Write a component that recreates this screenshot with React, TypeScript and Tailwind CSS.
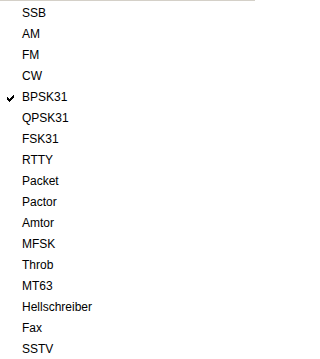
import React from "react";

const items = [
  "SSB",
  "AM",
  "FM",
  "CW",
  "BPSK31",
  "QPSK31",
  "FSK31",
  "RTTY",
  "Packet",
  "Pactor",
  "Amtor",
  "MFSK",
  "Throb",
  "MT63",
  "Hellschreiber",
  "Fax",
  "SSTV",
];

function Check() {
  return (
    <svg width="7" height="7" viewBox="0 0 7 7" shapeRendering="crispEdges">
      <path
        d="M0 2h1v3h-1zM1 3h1v3h-1zM2 4h1v3h-1zM3 3h1v3h-1zM4 2h1v3h-1zM5 1h1v3h-1zM6 0h1v3h-1z"
        fill="#000"
      />
    </svg>
  );
}

export default function App() {
  return (
    <div
      className="w-[255px] h-[359px] bg-white border-t border-[#d4d0c8] pt-[2px] text-[12px] text-black overflow-hidden"
      style={{ fontFamily: '"Liberation Sans", Arial, sans-serif' }}
    >
      {items.map((it) => (
        <div key={it} className="flex items-center h-[21px]">
          <div className="w-[22px] flex items-center justify-start pl-[7px] pt-[1px]">
            {it === "BPSK31" ? <Check /> : null}
          </div>
          <span className="leading-[21px]">{it}</span>
        </div>
      ))}
    </div>
  );
}
